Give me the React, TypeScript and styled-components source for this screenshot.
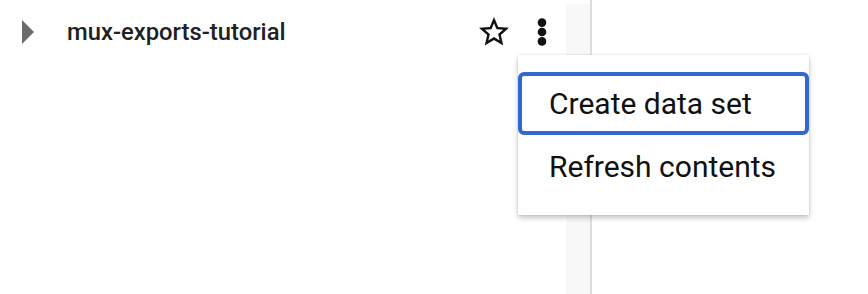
import React from "react";
import styled, { createGlobalStyle } from "styled-components";

const Global = createGlobalStyle`
  html, body { margin: 0; padding: 0; background: #ffffff; }
  body { font-family: Roboto, "Liberation Sans", Arial, sans-serif; }
`;

const Page = styled.div`
  position: relative;
  width: 868px;
  height: 294px;
  display: flex;
  overflow: hidden;
  background: #ffffff;
`;

const LeftPanel = styled.div`
  width: 590px;
  display: flex;
  flex-shrink: 0;
`;

const Tree = styled.div`
  flex: 1;
  display: flex;
  flex-direction: column;
`;

const Track = styled.div`
  width: 24px;
  margin-top: 4px;
  background: #f8f8f8;
`;

const Divider = styled.div`
  width: 2px;
  background: #dedede;
  flex-shrink: 0;
`;

const Row = styled.div`
  height: 64px;
  display: flex;
  align-items: center;
  padding-left: 22px;
`;

const Caret = styled.svg`
  width: 12px;
  height: 24px;
  flex-shrink: 0;
`;

const Label = styled.span`
  margin-left: 33px;
  font-family: Roboto, "Liberation Sans", sans-serif;
  font-weight: 500;
  font-size: 23.8px;
  color: #202124;
  flex: 1;
`;

const IconButton = styled.span<{ $w: number; $h: number; $mr: number }>`
  width: ${(p) => p.$w}px;
  height: ${(p) => p.$h}px;
  margin-right: ${(p) => p.$mr}px;
  display: flex;
  align-items: center;
  justify-content: center;
  flex-shrink: 0;
`;

const Menu = styled.div`
  position: absolute;
  left: 518px;
  top: 55px;
  width: 291px;
  padding: 17px 0;
  background: #ffffff;
  box-shadow: 0 3px 5px rgba(0, 0, 0, 0.22), 0 0 2px rgba(0, 0, 0, 0.12);
  display: flex;
  flex-direction: column;
`;

const MenuItem = styled.div<{ $focused?: boolean }>`
  box-sizing: border-box;
  height: 63px;
  display: flex;
  align-items: center;
  padding-left: ${(p) => (p.$focused ? "27px" : "31px")};
  border: ${(p) => (p.$focused ? "4px solid #3367d6" : "none")};
  border-radius: 6px;
  font-family: Roboto, "Liberation Sans", sans-serif;
  font-size: 30px;
  color: #111111;
`;

export default function App() {
  return (
    <>
      <Global />
      <Page>
        <LeftPanel>
          <Tree>
            <Row>
              <Caret viewBox="0 0 12 24">
                <polygon points="0,0 12,12 0,24" fill="#6b6b6b" />
              </Caret>
              <Label>mux-exports-tutorial</Label>
              <IconButton $w={36} $h={36} $mr={25}>
                <svg width="36" height="36" viewBox="0 0 24 24">
                  <path
                    fill="#111"
                    d="M22 9.24l-7.19-.62L12 2 9.19 8.63 2 9.24l5.46 4.73L5.82 21 12 17.27 18.18 21l-1.63-7.03L22 9.24zM12 15.4l-3.76 2.27 1-4.28-3.32-2.88 4.38-.38L12 6.1l1.71 4.04 4.38.38-3.32 2.88 1 4.28L12 15.4z"
                  />
                </svg>
              </IconButton>
              <IconButton $w={10} $h={28} $mr={19}>
                <svg width="10" height="28" viewBox="0 0 10 28">
                  <circle cx="5" cy="4.6" r="4.3" fill="#111" />
                  <circle cx="5" cy="14" r="4.3" fill="#111" />
                  <circle cx="5" cy="23.4" r="4.3" fill="#111" />
                </svg>
              </IconButton>
            </Row>
          </Tree>
          <Track />
        </LeftPanel>
        <Divider />
        <Menu>
          <MenuItem $focused>Create data set</MenuItem>
          <MenuItem>Refresh contents</MenuItem>
        </Menu>
      </Page>
    </>
  );
}
